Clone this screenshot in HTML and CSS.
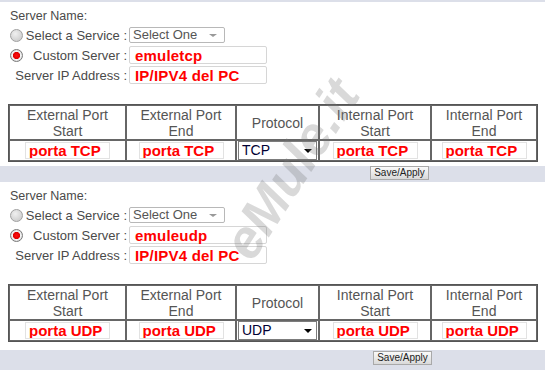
FILE: index.html
```html
<!DOCTYPE html>
<html>
<head>
<meta charset="utf-8">
<link rel="stylesheet" href="styles.css">
</head>
<body>
<div class="section">
  <div class="topline"></div>
  <div class="form">
    <div class="title">Server Name:</div>
    <div class="row r1">
      <div class="lbl"><span class="radio"></span><span class="txt">Select a Service :</span></div>
      <div class="sel">Select One<span class="arr"></span></div>
    </div>
    <div class="row r2">
      <div class="lbl"><span class="radio on"></span><span class="txt">Custom Server :</span></div>
      <div class="inp">emuletcp</div>
    </div>
    <div class="row r3">
      <div class="lbl"><span class="txt">Server IP Address :</span></div>
      <div class="inp">IP/IPV4 del PC</div>
    </div>
  </div>
  <table class="ports">
    <tr>
      <th class="c1">External Port<br>Start</th>
      <th class="c2">External Port<br>End</th>
      <th class="c3">Protocol</th>
      <th class="c4">Internal Port<br>Start</th>
      <th class="c5">Internal Port<br>End</th>
    </tr>
    <tr>
      <td><div class="pin">porta TCP</div></td>
      <td><div class="pin">porta TCP</div></td>
      <td><div class="proto">TCP<span class="darr"></span></div></td>
      <td><div class="pin">porta TCP</div></td>
      <td><div class="pin">porta TCP</div></td>
    </tr>
  </table>
  <div class="band b1"><span class="btn">Save/Apply</span></div>
</div>
<div class="section s2">
  <div class="topline"></div>
  <div class="form">
    <div class="title">Server Name:</div>
    <div class="row r1">
      <div class="lbl"><span class="radio"></span><span class="txt">Select a Service :</span></div>
      <div class="sel">Select One<span class="arr"></span></div>
    </div>
    <div class="row r2">
      <div class="lbl"><span class="radio on"></span><span class="txt">Custom Server :</span></div>
      <div class="inp">emuleudp</div>
    </div>
    <div class="row r3">
      <div class="lbl"><span class="txt">Server IP Address :</span></div>
      <div class="inp">IP/IPV4 del PC</div>
    </div>
  </div>
  <table class="ports">
    <tr>
      <th class="c1">External Port<br>Start</th>
      <th class="c2">External Port<br>End</th>
      <th class="c3">Protocol</th>
      <th class="c4">Internal Port<br>Start</th>
      <th class="c5">Internal Port<br>End</th>
    </tr>
    <tr>
      <td><div class="pin">porta UDP</div></td>
      <td><div class="pin">porta UDP</div></td>
      <td><div class="proto">UDP<span class="darr"></span></div></td>
      <td><div class="pin">porta UDP</div></td>
      <td><div class="pin">porta UDP</div></td>
    </tr>
  </table>
  <div class="band b2"><span class="btn">Save/Apply</span></div>
</div>
<div class="watermark">eMule.it</div>
</body>
</html>
```
FILE: styles.css
```css
html, body {
  margin: 0;
  padding: 0;
  background: #fff;
  width: 545px;
  height: 370px;
  overflow: hidden;
  font-family: "Liberation Sans", Arial, sans-serif;
  position: relative;
}
.section {
  display: flex;
  flex-direction: column;
}
.topline {
  height: 2px;
  background: #dcdfe9;
}
.form {
  padding-left: 10px;
  padding-top: 7px;
  display: flex;
  flex-direction: column;
  color: #4a4a4a;
  font-size: 13px;
}
.title {
  height: 14px;
  line-height: 14px;
  font-size: 12.5px;
}
.row {
  display: flex;
  align-items: center;
}
.r1 { margin-top: 4px; height: 16px; }
.r2 { margin-top: 3px; height: 18px; }
.r3 { margin-top: 2px; height: 18px; }
.lbl {
  width: 119px;
  display: flex;
  align-items: center;
  justify-content: space-between;
}
.lbl .txt {
  margin-left: auto;
  padding-right: 2px;
  white-space: nowrap;
}
.radio {
  width: 11px;
  height: 11px;
  border-radius: 50%;
  border: 1px solid #a0a0a0;
  background: radial-gradient(circle at 40% 35%, #f0f0f0, #c4c4c4);
  box-sizing: content-box;
}
.radio.on {
  background: radial-gradient(circle, #ff1010 0, #e00000 3.2px, #f4f4f4 4px, #e6e6e6 5px, #cfcfcf 6px);
  border-color: #7a7a7a;
}
.sel {
  width: 91px;
  height: 14px;
  border: 1px solid #b8b8b8;
  border-radius: 2px;
  font-size: 13px;
  line-height: 14px;
  color: #555;
  padding-left: 3px;
  box-sizing: content-box;
  position: relative;
}
.arr {
  position: absolute;
  right: 7px;
  top: 6px;
  width: 0;
  height: 0;
  border-left: 4px solid transparent;
  border-right: 4px solid transparent;
  border-top: 3px solid #999;
}
.inp {
  width: 131px;
  height: 16px;
  border: 1px solid #d6d6d6;
  border-radius: 2px;
  color: #ff0000;
  font-weight: bold;
  font-size: 15px;
  line-height: 17px;
  padding-left: 5px;
  letter-spacing: 0.2px;
  box-sizing: content-box;
}
.ports {
  margin-top: 20px;
  margin-left: 8px;
  width: 530px;
  border-collapse: separate;
  border-spacing: 0;
  border: 1px solid #555;
}
.ports th, .ports td {
  border: 1px solid #666;
  padding: 0;
  text-align: center;
}
.ports th {
  font-weight: normal;
  color: #555;
  font-size: 14px;
  line-height: 16px;
  height: 33px;
}
.c1 { width: 115px; }
.c2 { width: 108px; }
.c3 { width: 81px; }
.c4 { width: 110px; }
.ports td {
  height: 19px;
}
.pin {
  display: block;
  margin: 0 auto;
  width: 80px;
  height: 15px;
  border: 1px solid #e2e2e2;
  color: #ff0000;
  font-weight: bold;
  font-size: 15px;
  line-height: 15px;
  text-align: left;
  padding-left: 3px;
  white-space: nowrap;
  overflow: hidden;
  box-sizing: content-box;
}
.proto {
  margin: 0 1px;
  height: 17px;
  border: 1px solid #7c7c7c;
  font-size: 14px;
  line-height: 17px;
  color: #000033;
  text-align: left;
  padding-left: 3px;
  position: relative;
}
.darr {
  position: absolute;
  right: 4px;
  top: 7px;
  width: 0;
  height: 0;
  border-left: 4px solid transparent;
  border-right: 4px solid transparent;
  border-top: 4px solid #000;
}
.band {
  background: #dcdfe9;
  display: flex;
  align-items: flex-start;
}
.b1 { margin-top: 4px; height: 14px; padding-top: 0; }
.b2 { margin-top: 8px; height: 25px; padding-top: 1px; }
.btn {
  margin-left: 370px;
  width: 57px;
  height: 12px;
  border: 1px solid #a9a9a9;
  background: linear-gradient(#fafafa, #d9d9d9);
  font-size: 10px;
  line-height: 12px;
  color: #222;
  text-align: center;
  box-sizing: content-box;
}
.b2 .btn { margin-left: 373px; }
.watermark {
  position: absolute;
  left: 236px;
  top: 224px;
  height: 58px;
  line-height: 58px;
  font-family: "Liberation Sans", Arial, sans-serif;
  font-weight: bold;
  font-style: italic;
  font-size: 54px;
  color: rgba(120, 120, 120, 0.28);
  transform: rotate(-57deg);
  transform-origin: 0 50%;
  white-space: nowrap;
  pointer-events: none;
}
```
